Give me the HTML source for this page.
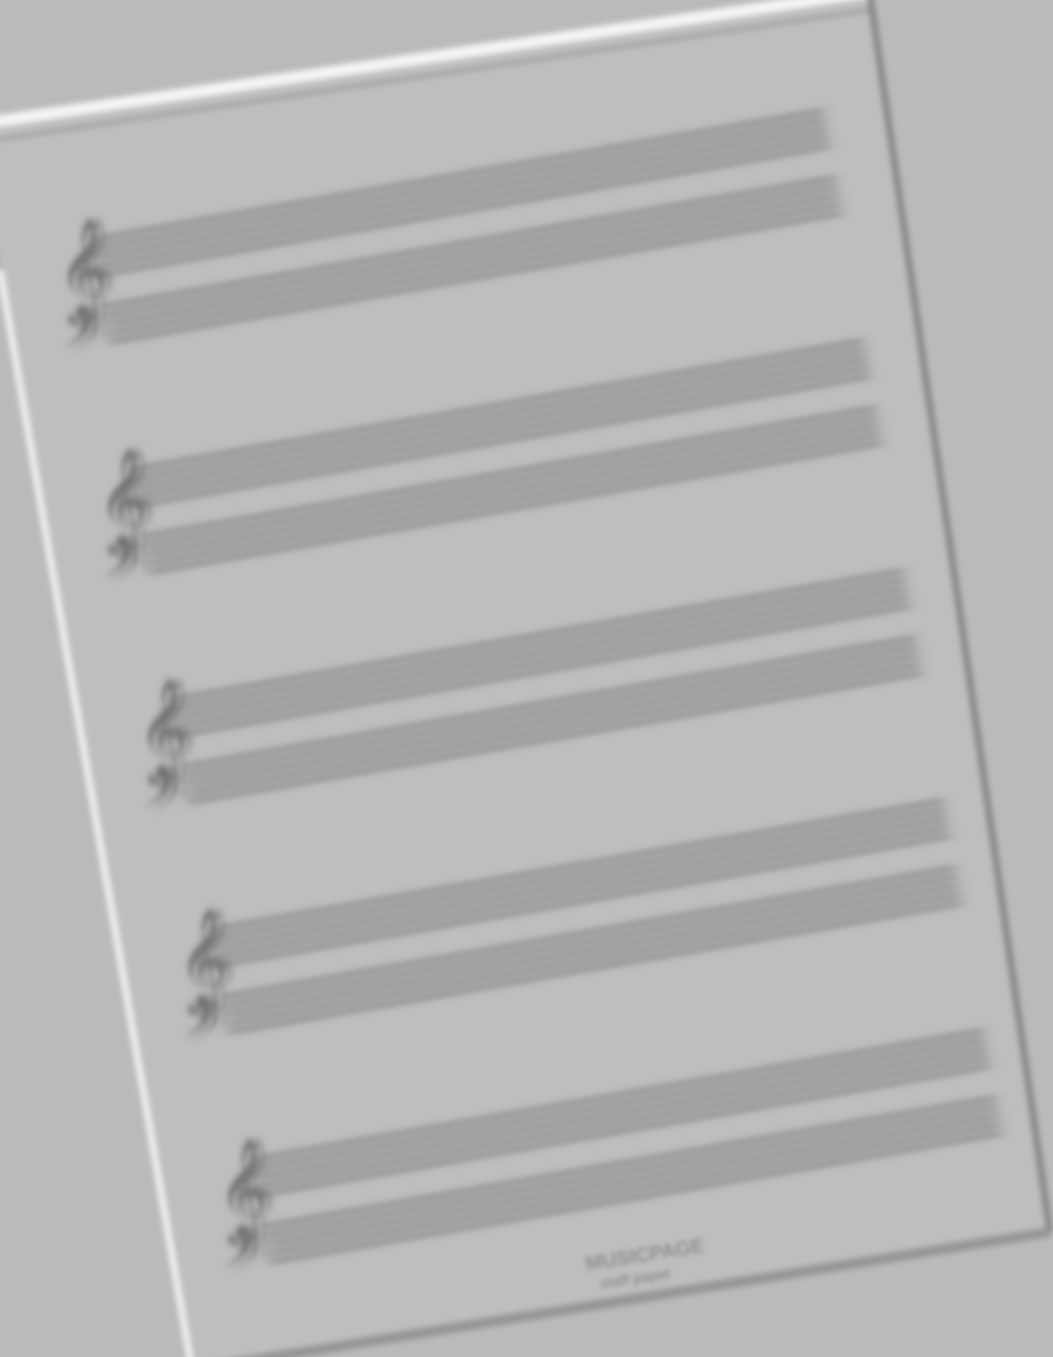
<!DOCTYPE html>
<html><head><meta charset="utf-8"><style>
html,body{margin:0;padding:0;background:#bababa;width:1053px;height:1357px;overflow:hidden}
svg{display:block}
</style></head><body>
<svg width="1053" height="1357" viewBox="0 0 1053 1357" xmlns="http://www.w3.org/2000/svg">
<defs>
<filter id="b" x="-10%" y="-50%" width="120%" height="200%"><feGaussianBlur stdDeviation="6 3.5"/></filter>
<filter id="c" x="-50%" y="-50%" width="200%" height="200%"><feGaussianBlur stdDeviation="3 4"/></filter>
<filter id="e" x="-10%" y="-10%" width="120%" height="120%"><feGaussianBlur stdDeviation="3"/></filter>
<filter id="t" x="-20%" y="-50%" width="140%" height="200%"><feGaussianBlur stdDeviation="2.5"/></filter>
<g id="staff">
<g stroke="#767676" stroke-width="3.5">
<line x1="0" y1="0" x2="745" y2="0"/><line x1="0" y1="9" x2="745" y2="9"/><line x1="0" y1="18" x2="745" y2="18"/><line x1="0" y1="27" x2="745" y2="27"/><line x1="0" y1="36" x2="745" y2="36"/>
<line x1="0" y1="68" x2="745" y2="68"/><line x1="0" y1="77" x2="745" y2="77"/><line x1="0" y1="86" x2="745" y2="86"/><line x1="0" y1="95" x2="745" y2="95"/><line x1="0" y1="104" x2="745" y2="104"/>
</g>
</g>
<g id="clef" fill="#6e6e6e" font-family="DejaVu Serif,serif">
<text x="-42" y="58" font-size="85">𝄞</text>
<text x="-34" y="58" font-size="85" opacity="0.6">𝄞</text>
<text x="-38" y="118" font-size="60">𝄢</text>
<text x="-30" y="122" font-size="60" opacity="0.6">𝄢</text>
</g>
</defs>
<rect width="1053" height="1357" fill="#bababa"/>
<polygon points="-20,128 870,-5 1050,1232 192,1370" fill="#bebebe"/>
<g filter="url(#e)" fill="none">
<polyline points="-20,124 870,-8" stroke="#f4f4f4" stroke-width="12"/>
<polyline points="-20,142 870,10" stroke="#a6a6a6" stroke-width="5"/>
<polyline points="0,270 192,1370" stroke="#f0f0f0" stroke-width="7"/>
<polyline points="870,-5 1050,1232" stroke="#888" stroke-width="7"/>
<polyline points="1050,1232 192,1370" stroke="#959595" stroke-width="10"/>
</g>
<g filter="url(#b)">
<use href="#staff" transform="translate(90,240) rotate(-10)"/>
<use href="#staff" transform="translate(130,470) rotate(-10)"/>
<use href="#staff" transform="translate(170,700) rotate(-10)"/>
<use href="#staff" transform="translate(210,930) rotate(-10)"/>
<use href="#staff" transform="translate(250,1160) rotate(-10)"/>
</g>
<g filter="url(#c)">
<use href="#clef" transform="translate(100,238)"/>
<use href="#clef" transform="translate(140,468)"/>
<use href="#clef" transform="translate(180,698)"/>
<use href="#clef" transform="translate(220,928)"/>
<use href="#clef" transform="translate(260,1158)"/>
</g>
<g filter="url(#t)" fill="#909090" font-family="Liberation Sans,sans-serif" font-weight="bold">
<text x="585" y="1262" font-size="20" transform="rotate(-9 640 1255)">MUSICPAGE</text>
<text x="596" y="1282" font-size="14" transform="rotate(-9 640 1255)">staff paper</text>
</g>
</svg>
</body></html>
